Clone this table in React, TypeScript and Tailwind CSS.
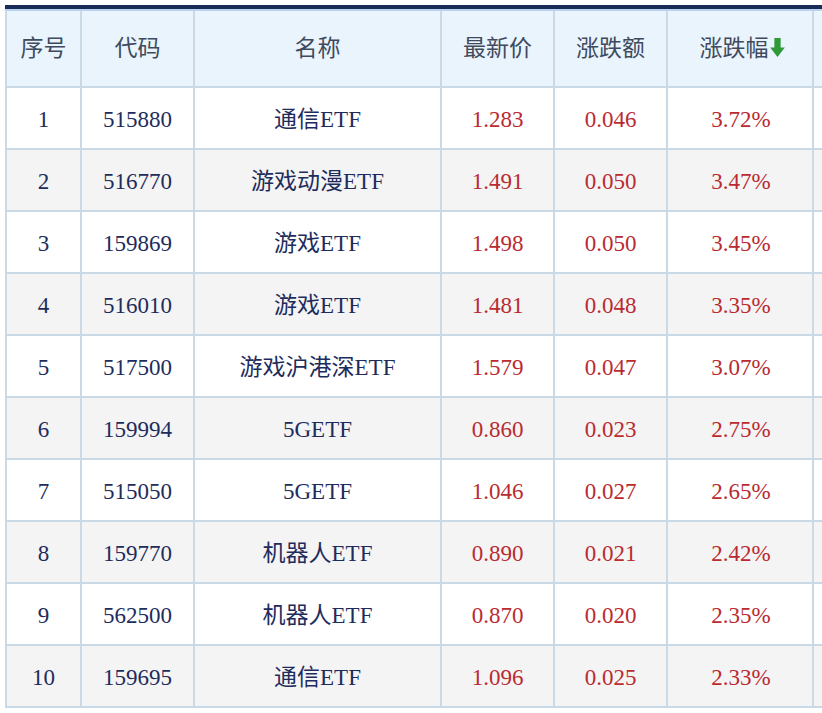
const rows = [
  ["1", "515880", "通信ETF", "1.283", "0.046", "3.72%"],
  ["2", "516770", "游戏动漫ETF", "1.491", "0.050", "3.47%"],
  ["3", "159869", "游戏ETF", "1.498", "0.050", "3.45%"],
  ["4", "516010", "游戏ETF", "1.481", "0.048", "3.35%"],
  ["5", "517500", "游戏沪港深ETF", "1.579", "0.047", "3.07%"],
  ["6", "159994", "5GETF", "0.860", "0.023", "2.75%"],
  ["7", "515050", "5GETF", "1.046", "0.027", "2.65%"],
  ["8", "159770", "机器人ETF", "0.890", "0.021", "2.42%"],
  ["9", "562500", "机器人ETF", "0.870", "0.020", "2.35%"],
  ["10", "159695", "通信ETF", "1.096", "0.025", "2.33%"],
];

const cols = "grid grid-cols-[75px_113px_247px_113px_113px_146px_1fr]";
const font = { fontFamily: '"Liberation Serif", "Noto Sans CJK SC", serif' };

function SortArrow() {
  return (
    <svg width="15" height="21" viewBox="0 0 14 20" className="inline-block ml-[1px] -mt-[4px]">
      <path d="M4 1h6v9h4L7 19 0 10h4z" fill="#2f9a3a" />
    </svg>
  );
}

export default function App() {
  return (
    <div className="w-[822px] h-[713px] overflow-hidden bg-white pt-[5px] pl-[5px]" style={font}>
      <div className="border-t-[4px] border-[#1b2b57]">
        <div className="h-[2px] bg-[#b7d3ee]" />
        <div className="border-l-2 border-[#c9d9e5]">
          <div className={`${cols} h-[77px] bg-[#eaf4fd] text-[23px] text-[#404a5e]`}>
            {["序号", "代码", "名称", "最新价", "涨跌额"].map((h) => (
              <div key={h} className="flex items-center justify-center pt-[2px] border-r-2 border-b-2 border-[#c9d9e5]">
                {h}
              </div>
            ))}
            <div className="flex items-center justify-center pt-[2px] border-r-2 border-b-2 border-[#c9d9e5] pl-[4px]">
              涨跌幅
              <SortArrow />
            </div>
            <div className="border-b-2 border-[#c9d9e5]" />
          </div>
          {rows.map((r, i) => (
            <div
              key={r[0]}
              className={`${cols} h-[62px] text-[23px] ${i % 2 === 0 ? "bg-white" : "bg-[#f4f4f4]"}`}
            >
              {r.map((v, j) => (
                <div
                  key={j}
                  className={`flex items-center justify-center pt-[4px] border-r-2 border-b-2 border-[#c9d9e5] ${
                    j < 3 ? "text-[#1e2c5c]" : "text-[#b92b31]"
                  } ${j === 5 ? "pl-[2px]" : ""}`}
                >
                  {v}
                </div>
              ))}
              <div className="border-b-2 border-[#c9d9e5]" />
            </div>
          ))}
        </div>
      </div>
    </div>
  );
}
